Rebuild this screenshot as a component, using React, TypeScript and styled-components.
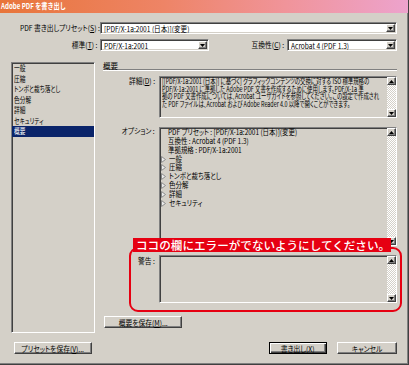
import React from "react";
import styled, { createGlobalStyle, css } from "styled-components";

const BG = "#d4d0c8";
const FACE = `"Noto Sans CJK JP", "Noto Sans", sans-serif`;

const GlobalStyle = createGlobalStyle`
  html, body { margin: 0; padding: 0; background: ${BG}; }
  body { font-family: ${FACE}; }
  * { box-sizing: border-box; }
`;

const Window = styled.div`
  position: relative;
  width: 409px;
  height: 365px;
  background: ${BG};
  border-right: 1px solid #404040;
  border-bottom: 1px solid #404040;
  box-shadow: inset -1px -1px 0 #808080;
  display: flex;
  flex-direction: column;
  font-family: ${FACE};
  font-size: 7.5px;
  font-feature-settings: "palt" 1;
  color: #000;
  overflow: hidden;
`;

/* Dialog text is horizontally condensed, as in the reference capture */
const Cond = styled.span<{ $sx?: number; $o?: string }>`
  display: inline-block;
  white-space: nowrap;
  transform: scaleX(${(p) => p.$sx ?? 0.9});
  transform-origin: ${(p) => p.$o ?? "left"} center;
`;

const TitleBar = styled.div`
  flex: none;
  height: 13px;
  padding-left: 1px;
  background: linear-gradient(90deg, #e8753a 0%, #ee8466 40%, #f0949a 70%, #eda3cd 100%);
  color: #fff;
  font-weight: 700;
  font-size: 7.5px;
  font-feature-settings: normal;
  line-height: 12px;
  white-space: nowrap;
`;

const Content = styled.div`
  flex: 1;
  display: flex;
  flex-direction: column;
  padding: 9px 11px 0 11px;
`;

const FieldRow = styled.div<{ $cols: string; $mt: number }>`
  display: grid;
  grid-template-columns: ${(p) => p.$cols};
  column-gap: 3px;
  align-items: center;
  height: 12px;
  margin-top: ${(p) => p.$mt}px;
`;

const Label = styled.div`
  text-align: right;
  white-space: nowrap;
  line-height: 12px;
`;

const sunken = css`
  border: 1px solid;
  border-color: #808080 #fff #fff #808080;
  box-shadow: inset 1px 1px 0 #404040, inset -1px -1px 0 ${BG};
`;

const raised = css`
  background: ${BG};
  border: 1px solid;
  border-color: #fff #404040 #404040 #fff;
  box-shadow: inset -1px -1px 0 #808080;
`;

const SelectBox = styled.div`
  ${sunken};
  height: 12px;
  background: #fff;
  display: flex;
  align-items: center;
  padding: 1px 1px 1px 3px;
`;

const SelectText = styled.span`
  flex: 1;
  min-width: 0;
  white-space: nowrap;
  overflow: hidden;
  line-height: 9px;
`;

const ArrowBtn = styled.span`
  ${raised};
  flex: none;
  width: 9px;
  height: 8px;
  display: flex;
  align-items: center;
  justify-content: center;
`;

const Main = styled.div`
  display: flex;
  gap: 5px;
  margin-top: 11px;
  height: 271px;
`;

const SideList = styled.div`
  ${sunken};
  width: 84px;
  flex: none;
  display: flex;
  flex-direction: column;
`;

const SideItem = styled.div<{ $selected?: boolean }>`
  height: 10.5px;
  line-height: 10.5px;
  padding-left: 2px;
  white-space: nowrap;
  overflow: hidden;
  background: ${(p) => (p.$selected ? "#0a246a" : "transparent")};
  color: ${(p) => (p.$selected ? "#fff" : "#000")};
`;

const Pane = styled.div`
  flex: 1;
  display: flex;
  flex-direction: column;
`;

const Heading = styled.div`
  margin-left: 3px;
  height: 8px;
  line-height: 7px;
  border-bottom: 1px solid #808080;
  box-shadow: 0 1px 0 #fff;
`;

const Field = styled.div<{ $h: number; $mt: number }>`
  display: grid;
  grid-template-columns: 55px 1fr;
  column-gap: 4px;
  height: ${(p) => p.$h}px;
  margin-top: ${(p) => p.$mt}px;
`;

const FieldLabel = styled.div<{ $pt: number }>`
  text-align: right;
  white-space: nowrap;
  line-height: 8px;
  padding-top: ${(p) => p.$pt}px;
`;

const Well = styled.div`
  ${sunken};
  display: flex;
  overflow: hidden;
`;

const WellBody = styled.div`
  flex: 1;
  min-width: 0;
  overflow: hidden;
`;

const DetailText = styled.div`
  padding: 0 0 0 2px;
`;

const DetailLine = styled.div`
  height: 7.5px;
  line-height: 7.5px;
  white-space: nowrap;
`;

const OptLine = styled.div<{ $indent?: boolean }>`
  height: 8.87px;
  line-height: 8.87px;
  display: flex;
  align-items: center;
  gap: 3px;
  white-space: nowrap;
  padding-left: ${(p) => (p.$indent ? 8 : 1)}px;
`;

const Scrollbar = styled.div`
  flex: none;
  width: 9px;
  display: flex;
  flex-direction: column;
  justify-content: space-between;
  background-color: #eae8e4;
  background-image: repeating-conic-gradient(#ffffff 0 25%, #d4d0c8 0 50%);
  background-size: 2px 2px;
`;

const ScrollBtn = styled.div`
  ${raised};
  height: 8px;
  display: flex;
  align-items: center;
  justify-content: center;
`;

const PushButton = styled.button<{ $w: number; $default?: boolean; $ml?: number }>`
  ${raised};
  width: ${(p) => p.$w}px;
  height: 12px;
  padding: 0;
  margin: 0 0 0 ${(p) => p.$ml ?? 0}px;
  font: inherit;
  font-feature-settings: inherit;
  color: #000;
  line-height: 9px;
  white-space: nowrap;
  display: flex;
  align-items: center;
  justify-content: center;
  ${(p) =>
    p.$default &&
    css`
      border: 1px solid #000;
      box-shadow: inset 1px 1px 0 #fff, inset -1px -1px 0 #404040, inset -2px -2px 0 #808080;
    `}
`;

const ButtonRow = styled.div`
  display: flex;
  margin-top: 13px;
  height: 12px;
`;

const Footer = styled.div`
  display: flex;
  align-items: center;
  margin-top: 9px;
  height: 12px;
`;

const Callout = styled.div`
  position: absolute;
  left: 129px;
  top: 247px;
  width: 273px;
  height: 65px;
  border: 2px solid #e60012;
  border-radius: 9px;
  pointer-events: none;
`;

const CalloutLabel = styled.div`
  position: absolute;
  left: 2px;
  top: -11px;
  height: 14px;
  padding: 0 1px 0 3px;
  background: #e60012;
  color: #fff;
  font-size: 11.6px;
  font-weight: 500;
  font-feature-settings: normal;
  line-height: 14px;
  white-space: nowrap;
`;

const Down = () => (
  <svg width="5" height="3" viewBox="0 0 5 3">
    <polygon points="0,0 5,0 2.5,3" fill="#000" />
  </svg>
);
const Up = () => (
  <svg width="5" height="3" viewBox="0 0 5 3">
    <polygon points="0,3 5,3 2.5,0" fill="#000" />
  </svg>
);
const Twisty = () => (
  <svg width="5" height="7" viewBox="0 0 5 7">
    <polygon points="0.5,0.5 4.5,3.5 0.5,6.5" fill="#ececec" stroke="#8a8a8a" strokeWidth="1" />
  </svg>
);

const Select = ({ children }: { children: React.ReactNode }) => (
  <SelectBox>
    <SelectText>
      <Cond $sx={0.88}>{children}</Cond>
    </SelectText>
    <ArrowBtn>
      <Down />
    </ArrowBtn>
  </SelectBox>
);

const VScroll = () => (
  <Scrollbar>
    <ScrollBtn>
      <Up />
    </ScrollBtn>
    <ScrollBtn>
      <Down />
    </ScrollBtn>
  </Scrollbar>
);

const sideItems = ["一般", "圧縮", "トンボと裁ち落とし", "色分解", "詳細", "セキュリティ", "概要"];
const treeItems = ["一般", "圧縮", "トンボと裁ち落とし", "色分解", "詳細", "セキュリティ"];
const details = [
  "[[PDF/X-1a:2001 (日本)] に基づく] グラフィックコンテンツの交換に対する ISO 標準規格の",
  "PDF/X-1a:2001 に準拠した Adobe PDF 文書を作成するために使用します。PDF/X-1a 準",
  "拠の PDF 文書作成については、Acrobat ユーザガイドを参照してください。この設定で作成され",
  "た PDF ファイルは、Acrobat および Adobe Reader 4.0 以降で開くことができます。",
];

export default function App() {
  return (
    <>
      <GlobalStyle />
      <Window>
        <TitleBar>
          <Cond $sx={0.82}>Adobe PDF を書き出し</Cond>
        </TitleBar>
        <Content>
          <FieldRow $cols="86px 1fr" $mt={0}>
            <Label>
              <Cond $o="right">
                PDF 書き出しプリセット(<u>S</u>) :
              </Cond>
            </Label>
            <Select>[PDF/X-1a:2001 (日本)](変更)</Select>
          </FieldRow>
          <FieldRow $cols="86px 109px 1fr 110px" $mt={5}>
            <Label>
              <Cond $o="right">
                標準(<u>T</u>) :
              </Cond>
            </Label>
            <Select>PDF/X-1a:2001</Select>
            <Label>
              <Cond $o="right">
                互換性(<u>C</u>) :
              </Cond>
            </Label>
            <Select>Acrobat 4 (PDF 1.3)</Select>
          </FieldRow>
          <Main>
            <SideList>
              {sideItems.map((s) => (
                <SideItem key={s} $selected={s === "概要"}>
                  <Cond $sx={0.76}>{s}</Cond>
                </SideItem>
              ))}
            </SideList>
            <Pane>
              <Heading>
                <Cond $sx={1}>概要</Cond>
              </Heading>
              <Field $h={42} $mt={6}>
                <FieldLabel $pt={1}>
                  <Cond $o="right">
                    詳細(<u>D</u>) :
                  </Cond>
                </FieldLabel>
                <Well>
                  <WellBody>
                    <DetailText>
                      {details.map((l) => (
                        <DetailLine key={l}>
                          <Cond $sx={0.72}>{l}</Cond>
                        </DetailLine>
                      ))}
                    </DetailText>
                  </WellBody>
                  <VScroll />
                </Well>
              </Field>
              <Field $h={119} $mt={9}>
                <FieldLabel $pt={0}>
                  <Cond $o="right">オプション :</Cond>
                </FieldLabel>
                <Well>
                  <WellBody>
                    <OptLine $indent>
                      <Cond $sx={0.86}>PDF プリセット : [PDF/X-1a:2001 (日本)](変更)</Cond>
                    </OptLine>
                    <OptLine $indent>
                      <Cond $sx={0.86}>互換性 : Acrobat 4 (PDF 1.3)</Cond>
                    </OptLine>
                    <OptLine $indent>
                      <Cond $sx={0.86}>準拠規格 : PDF/X-1a:2001</Cond>
                    </OptLine>
                    {treeItems.map((t) => (
                      <OptLine key={t}>
                        <Twisty />
                        <Cond $sx={0.86}>{t}</Cond>
                      </OptLine>
                    ))}
                  </WellBody>
                  <VScroll />
                </Well>
              </Field>
              <Field $h={48} $mt={9}>
                <FieldLabel $pt={2}>
                  <Cond $o="right">警告 :</Cond>
                </FieldLabel>
                <Well>
                  <WellBody />
                  <VScroll />
                </Well>
              </Field>
              <ButtonRow>
                <PushButton $w={78} $ml={4}>
                  <Cond $o="center">
                    概要を保存(<u>M</u>)...
                  </Cond>
                </PushButton>
              </ButtonRow>
            </Pane>
          </Main>
          <Footer>
            <PushButton $w={78} $ml={3}>
              <Cond $o="center">
                プリセットを保存(<u>V</u>)...
              </Cond>
            </PushButton>
            <PushButton $w={59} $ml={177} $default>
              <Cond $o="center">
                書き出し(<u>X</u>)
              </Cond>
            </PushButton>
            <PushButton $w={60} $ml={10}>
              <Cond $o="center">キャンセル</Cond>
            </PushButton>
          </Footer>
        </Content>
        <Callout>
          <CalloutLabel>ココの欄にエラーがでないようにしてください。</CalloutLabel>
        </Callout>
      </Window>
    </>
  );
}
